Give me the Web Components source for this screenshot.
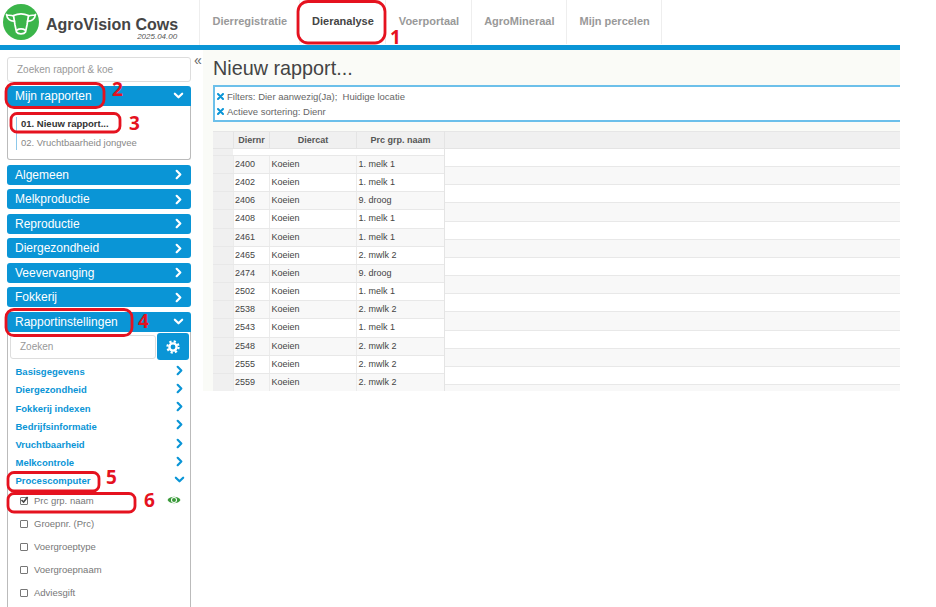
<!DOCTYPE html>
<html lang="nl">
<head>
<meta charset="utf-8">
<title>AgroVision Cows</title>
<style>
  html, body { margin: 0; height: 607px; overflow: hidden; background: #fff; }
  body { font-family: "Liberation Sans", Arial, sans-serif; position: relative; }
</style>
</head>
<body>
<av-app>
  <av-header slot="header">
    <av-tab>Dierregistratie</av-tab>
    <av-tab active>Dieranalyse</av-tab>
    <av-tab>Voerportaal</av-tab>
    <av-tab>AgroMineraal</av-tab>
    <av-tab>Mijn percelen</av-tab>
  </av-header>
  <av-sidebar slot="side">
    <side-search placeholder="Zoeken rapport &amp; koe"></side-search>
    <side-panel heading="Mijn rapporten" open>
      <report-list>
        <b>01. Nieuw rapport...</b>
        <span>02. Vruchtbaarheid jongvee</span>
      </report-list>
    </side-panel>
    <side-panel heading="Algemeen"></side-panel>
    <side-panel heading="Melkproductie"></side-panel>
    <side-panel heading="Reproductie"></side-panel>
    <side-panel heading="Diergezondheid"></side-panel>
    <side-panel heading="Veevervanging"></side-panel>
    <side-panel heading="Fokkerij"></side-panel>
    <side-panel heading="Rapportinstellingen" open bleed>
      <settings-search></settings-search>
      <field-group label="Basisgegevens"></field-group>
      <field-group label="Diergezondheid"></field-group>
      <field-group label="Fokkerij indexen"></field-group>
      <field-group label="Bedrijfsinformatie"></field-group>
      <field-group label="Vruchtbaarheid"></field-group>
      <field-group label="Melkcontrole"></field-group>
      <field-group label="Procescomputer" open></field-group>
      <field-check checked visible>Prc grp. naam</field-check>
      <field-check>Groepnr. (Prc)</field-check>
      <field-check>Voergroeptype</field-check>
      <field-check>Voergroepnaam</field-check>
      <field-check>Adviesgift</field-check>
    </side-panel>
  </av-sidebar>
  <av-report slot="main" title-text="Nieuw rapport...">
    <filter-box>
      <filter-line>Filters: Dier aanwezig(Ja);&nbsp; Huidige locatie</filter-line>
      <filter-line>Actieve sortering: Dienr</filter-line>
    </filter-box>
    <report-table></report-table>
  </av-report>
</av-app>
<note-layer></note-layer>

<script>
const BLUE = '#0a95d6';
const chevron = (dir, color, size) => {
  const pts = dir === 'down' ? '2,4 6,8 10,4' : '4,2 8,6 4,10';
  return `<svg width="${size}" height="${size}" viewBox="0 0 12 12" fill="none" stroke="${color}" stroke-width="2.4" stroke-linecap="round" stroke-linejoin="round"><polyline points="${pts}"/></svg>`;
};

class AvApp extends HTMLElement {
  constructor() {
    super();
    this.attachShadow({ mode: 'open' });
    this.shadowRoot.innerHTML = `
      <style>
        :host { display: block; width: 900px; height: 607px; overflow: hidden; }
        .body { display: flex; height: 557px; }
      </style>
      <slot name="header"></slot>
      <div class="body">
        <slot name="side"></slot>
        <slot name="main"></slot>
      </div>
    `;
  }
}

class AvHeader extends HTMLElement {
  constructor() {
    super();
    this.attachShadow({ mode: 'open' });
    this.shadowRoot.innerHTML = `
      <style>
        :host { display: flex; height: 45px; border-bottom: 5px solid ${BLUE}; background: #fff; color: #444; }
        .brand { width: 200px; box-sizing: border-box; display: flex; padding: 3px 0 0 2px; gap: 6px; border-right: 1px solid #eee; }
        .name { font-size: 16px; font-weight: bold; line-height: 14px; height: 14px; margin-top: 15px; color: #454545; white-space: nowrap; position: relative; }
        .ver { position: absolute; right: 1px; top: 15px; font-size: 8px; line-height: 8px; font-weight: normal; font-style: italic; color: #555; }
        nav { display: flex; }
      </style>
      <div class="brand">
        <svg width="38" height="38" viewBox="0 0 38 38">
          <circle cx="19" cy="19" r="18" fill="#3bb54a"/>
          <g fill="none" stroke="#fff" stroke-width="1.7" stroke-linejoin="round" stroke-linecap="round">
            <path d="M11.5 12.5 C16 10.5 22 10.5 26.5 12.5 L25 22 L23.5 29 C22 31.5 16 31.5 14.5 29 L13 22 Z"/>
            <path d="M11.5 13 C8.5 11.5 6 13 4.5 11.5 C5 16 8.5 18.5 12.5 18"/>
            <path d="M26.5 13 C29.5 11.5 32 13 33.5 11.5 C33 16 29.5 18.5 25.5 18"/>
            <path d="M15 27 C17 25.5 21 25.5 23 27"/>
          </g>
        </svg>
        <div class="name">AgroVision Cows<span class="ver">2025.04.00</span></div>
      </div>
      <nav><slot></slot></nav>
    `;
  }
}

class AvTab extends HTMLElement {
  constructor() {
    super();
    this.attachShadow({ mode: 'open' });
    this.shadowRoot.innerHTML = `
      <style>
        :host { display: flex; align-items: center; height: 44px; padding: 0 11.5px 2px 12.5px; box-sizing: border-box; border-right: 1px solid #eee;
                font-size: 11px; font-weight: bold; color: #999; white-space: nowrap; }
        :host([active]) { color: #444; }
      </style>
      <slot></slot>
    `;
  }
}

class AvSidebar extends HTMLElement {
  constructor() {
    super();
    this.attachShadow({ mode: 'open' });
    this.shadowRoot.innerHTML = `
      <style>
        :host { display: flex; flex-direction: column; gap: 4.5px; width: 203px; flex: none; box-sizing: border-box; padding: 7px 12px 0 7px; overflow: hidden; position: relative; background: #fff; }
        .collapse { position: absolute; left: 194px; top: 3px; font-size: 14px; line-height: 14px; color: #666; }
      </style>
      <span class="collapse">«</span>
      <slot></slot>
    `;
  }
}

class SideSearch extends HTMLElement {
  constructor() {
    super();
    this.attachShadow({ mode: 'open' });
    this.shadowRoot.innerHTML = `
      <style>
        :host { display: block; height: 25px; flex: none; box-sizing: border-box; border: 1px solid #ddd; border-radius: 3px; margin-bottom: -1px;
                font-size: 10px; line-height: 23px; color: #999; padding-left: 9px; }
      </style>
      ${this.getAttribute('placeholder')}
    `;
  }
}

class SidePanel extends HTMLElement {
  constructor() {
    super();
    this.attachShadow({ mode: 'open' });
    const open = this.hasAttribute('open');
    this.shadowRoot.innerHTML = `
      <style>
        :host { display: block; flex: none; }
        .head { display: flex; align-items: center; justify-content: space-between; height: 20px; padding: 0 7px 0 8px; background: ${BLUE}; border-radius: 3px 3px 0 0; color: #fff; font-size: 12px; }
        :host(:not([open])) .head { border-radius: 3px; }
        .body { border: 1px solid #bbb; border-top: 0; border-radius: 0 0 3px 3px; background: #fff; }
        :host(:not([open])) .body { display: none; }
        :host([bleed]) .body { padding-bottom: 30px; }
      </style>
      <div class="head"><span>${this.getAttribute('heading')}</span>${chevron(open ? 'down' : 'right', '#fff', 11)}</div>
      <div class="body"><slot></slot></div>
    `;
  }
}

class ReportList extends HTMLElement {
  constructor() {
    super();
    this.attachShadow({ mode: 'open' });
    this.shadowRoot.innerHTML = `
      <style>
        :host { display: flex; flex-direction: column; margin: 0 0 0 8px; padding: 11px 0 9px; font-size: 9.5px; line-height: 10px; color: #888; }
        .items { display: flex; flex-direction: column; gap: 9.5px; border-left: 1px solid #8cc8ea; padding: 2px 0 2px 4px; margin: 0; }
        ::slotted(b) { color: #333; }
      </style>
      <div class="items"><slot></slot></div>
    `;
  }
}

class SettingsSearch extends HTMLElement {
  constructor() {
    super();
    this.attachShadow({ mode: 'open' });
    this.shadowRoot.innerHTML = `
      <style>
        :host { display: flex; align-items: center; gap: 1px; height: 30px; padding: 0 1px 0 2px; margin-bottom: 1px; }
        .input { flex: 1; height: 24px; box-sizing: border-box; border: 1px solid #ddd; border-radius: 3px; font-size: 10px; line-height: 22px; color: #999; padding-left: 9px; }
        .btn { width: 32px; height: 27px; display: flex; align-items: center; justify-content: center; background: ${BLUE}; border-radius: 3px; }
      </style>
      <div class="input">Zoeken</div>
      <div class="btn">
        <svg width="14" height="14" viewBox="0 0 14 14">
          <circle cx="7" cy="7" r="3.6" fill="none" stroke="#fff" stroke-width="2.4"/>
          <circle cx="7" cy="7" r="5.6" fill="none" stroke="#fff" stroke-width="2.2" stroke-dasharray="2.2 2.2"/>
        </svg>
      </div>
    `;
  }
}

class FieldGroup extends HTMLElement {
  constructor() {
    super();
    this.attachShadow({ mode: 'open' });
    const open = this.hasAttribute('open');
    this.shadowRoot.innerHTML = `
      <style>
        :host { display: flex; justify-content: space-between; align-items: center; height: 18.25px; padding: 0 5.5px 0 7.5px; font-size: 9.5px; font-weight: bold; color: ${BLUE}; }
        :host([open]) { height: 17.25px; }
        svg { margin-top: -3px; }
      </style>
      <span>${this.getAttribute('label')}</span>${chevron(open ? 'down' : 'right', BLUE, 11)}
    `;
  }
}

class FieldCheck extends HTMLElement {
  constructor() {
    super();
    this.attachShadow({ mode: 'open' });
    const tick = this.hasAttribute('checked')
      ? '<svg class="tick" width="9" height="8" viewBox="0 0 9 8" fill="none" stroke="#444" stroke-width="1.6"><polyline points="1.5,4 3.6,6 7.6,1"/></svg>' : '';
    const eye = this.hasAttribute('visible')
      ? '<svg class="eye" width="14" height="10" viewBox="0 0 14 10"><path d="M.5 5C3 .6 11 .6 13.5 5 11 9.4 3 9.4 .5 5Z" fill="#3a9a3a"/><circle cx="7" cy="5" r="3" fill="#fff"/><circle cx="7" cy="5" r="2" fill="#3a9a3a"/></svg>' : '';
    this.shadowRoot.innerHTML = `
      <style>
        :host { display: flex; align-items: center; height: 23px; padding-left: 12px; font-size: 9.5px; color: #777; position: relative; }
        .box { width: 8px; height: 8px; box-sizing: border-box; border: 1px solid #777; border-radius: 1px; margin-right: 6px; position: relative; flex: none; }
        .tick { position: absolute; left: -1px; top: -2px; }
        .eye { position: absolute; left: 159px; top: 6px; }
      </style>
      <span class="box">${tick}</span><slot></slot>${eye}
    `;
  }
}

class AvReport extends HTMLElement {
  constructor() {
    super();
    this.attachShadow({ mode: 'open' });
    this.shadowRoot.innerHTML = `
      <style>
        :host { display: block; flex: 1; min-width: 0; height: 341px; overflow: hidden; box-sizing: border-box; background: #fafbf7; padding-left: 10px; color: #444; }
        h1 { margin: 0; height: 35px; font-size: 19.8px; font-weight: normal; line-height: 36px; color: #444; }
      </style>
      <h1>${this.getAttribute('title-text')}</h1>
      <slot></slot>
    `;
  }
}

class FilterBox extends HTMLElement {
  constructor() {
    super();
    this.attachShadow({ mode: 'open' });
    this.shadowRoot.innerHTML = `
      <style>
        :host { display: flex; flex-direction: column; justify-content: center; gap: 4px; height: 37px; box-sizing: border-box; margin-bottom: 9px; padding: 1px 0 0 2px;
                background: #fff; border: 2px solid #6cc0ea; border-right: 0; font-size: 9.5px; color: #666; }
      </style>
      <slot></slot>
    `;
  }
}

class FilterLine extends HTMLElement {
  constructor() {
    super();
    this.attachShadow({ mode: 'open' });
    this.shadowRoot.innerHTML = `
      <style>
        :host { display: flex; align-items: center; gap: 3px; line-height: 11px; white-space: nowrap; }
        svg { flex: none; }
      </style>
      <svg width="7" height="7" viewBox="0 0 7 7" stroke="${BLUE}" stroke-width="2" stroke-linecap="round"><path d="M1 1l5 5M6 1l-5 5"/></svg>
      <slot></slot>
    `;
  }
}

const ROWS = [
  ['2400', '1. melk 1'], ['2402', '1. melk 1'], ['2406', '9. droog'], ['2408', '1. melk 1'],
  ['2461', '1. melk 1'], ['2465', '2. mwlk 2'], ['2474', '9. droog'], ['2502', '1. melk 1'],
  ['2538', '2. mwlk 2'], ['2543', '1. melk 1'], ['2548', '2. mwlk 2'], ['2555', '2. mwlk 2'],
  ['2559', '2. mwlk 2']
];

class ReportTable extends HTMLElement {
  constructor() {
    super();
    this.attachShadow({ mode: 'open' });
    const rows = ROWS.map((r, i) => `
      <div class="row ${i % 2 ? '' : 'alt'}"><i></i><span>${r[0]}</span><span>Koeien</span><span>${r[1]}</span></div>`).join('');
    let stripes = '';
    for (let i = 0; i < 14; i++) stripes += `<div class="stripe ${i % 2 ? 'alt' : ''}"></div>`;
    this.shadowRoot.innerHTML = `
      <style>
        :host { display: flex; height: 260px; overflow: hidden; font-size: 9px; color: #444; background: #fff; }
        .data { width: 231px; flex: none; }
        .row, .head { display: grid; grid-template-columns: 20px 36px 87px 88px; box-sizing: border-box; }
        .head { height: 18px; background: #f0f0f0; border-top: 1px solid #e6e6e6; border-bottom: 1px solid #e4e4e4; font-weight: bold; color: #555; line-height: 17px; text-align: center; }
        .head span { border-left: 1px solid #e4e4e4; }
        .spacer { height: 7px; background: linear-gradient(to right, #f0f0f0 20px, #fff 20px); border-bottom: 1px solid #e8e8e8; box-sizing: border-box; }
        .row { height: 18.17px; border-bottom: 1px solid #e8e8e8; line-height: 17px; background: #fff; }
        .row.alt { background: #f8f8f8; }
        .row i { background: #f0f0f0; }
        .row span { padding-left: 1px; border-left: 1px solid #ebebeb; }
        .row span:nth-child(n+3) { padding-left: 1.5px; }
        .fill { flex: 1; border-left: 1px solid #e4e4e4; }
        .fill .head { display: block; }
        .stripe { height: 18.17px; box-sizing: border-box; background: #fff; border-bottom: 1px solid #e8e8e8; }
        .stripe.alt { background: #f8f8f8; }
      </style>
      <div class="data">
        <div class="head"><i></i><span>Diernr</span><span>Diercat</span><span>Prc grp. naam</span></div>
        <div class="spacer"></div>
        ${rows}
      </div>
      <div class="fill">
        <div class="head"></div>
        ${stripes}
      </div>
    `;
  }
}

// red call-outs drawn over the screenshot
const NOTES = [
  { n: 1, x: 298, y: 1.5, w: 87, h: 41.5, r: 10, tx: 390, ty: 44 },
  { n: 2, x: 6, y: 83.5, w: 98, h: 24, r: 8, tx: 112, ty: 96 },
  { n: 3, x: 11, y: 113.5, w: 109, h: 18.5, r: 6, tx: 129, ty: 130 },
  { n: 4, x: 6, y: 309.5, w: 126, h: 26, r: 8, tx: 138, ty: 328 },
  { n: 5, x: 8, y: 472.5, w: 91, h: 18.5, r: 6, tx: 106, ty: 484 },
  { n: 6, x: 8, y: 493.5, w: 127, h: 18.5, r: 6, tx: 144, ty: 507 }
];

class NoteLayer extends HTMLElement {
  constructor() {
    super();
    this.attachShadow({ mode: 'open' });
    const marks = NOTES.map(m => `
      <rect x="${m.x}" y="${m.y}" width="${m.w}" height="${m.h}" rx="${m.r}"/>
      <text x="${m.tx}" y="${m.ty}">${m.n}</text>`).join('');
    this.shadowRoot.innerHTML = `
      <style>
        :host { position: absolute; left: 0; top: 0; width: 936px; height: 607px; pointer-events: none; }
        rect { fill: none; stroke: #e5121f; stroke-width: 2.8; }
        text { fill: #e5121f; font: bold 19px "Open Sans", sans-serif; }
      </style>
      <svg width="936" height="607">${marks}</svg>
    `;
  }
}

customElements.define('av-app', AvApp);
customElements.define('av-header', AvHeader);
customElements.define('av-tab', AvTab);
customElements.define('av-sidebar', AvSidebar);
customElements.define('side-search', SideSearch);
customElements.define('side-panel', SidePanel);
customElements.define('report-list', ReportList);
customElements.define('settings-search', SettingsSearch);
customElements.define('field-group', FieldGroup);
customElements.define('field-check', FieldCheck);
customElements.define('av-report', AvReport);
customElements.define('filter-box', FilterBox);
customElements.define('filter-line', FilterLine);
customElements.define('report-table', ReportTable);
customElements.define('note-layer', NoteLayer);
</script>
</body>
</html>
